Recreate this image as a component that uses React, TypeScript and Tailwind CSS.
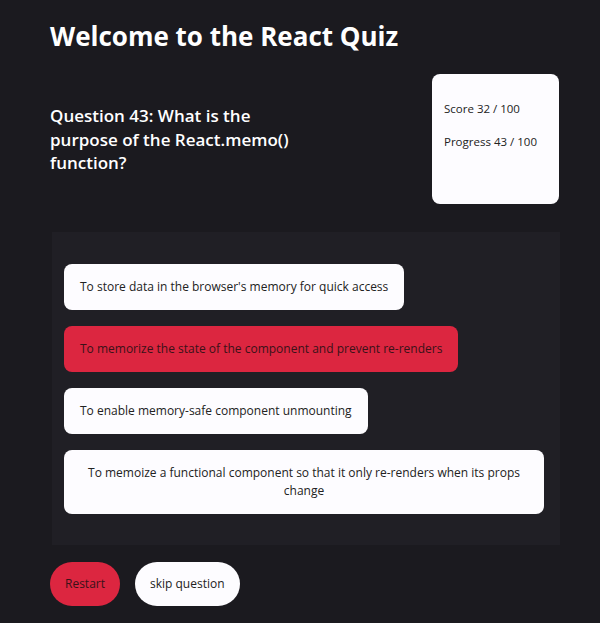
const answers = [
  "To store data in the browser's memory for quick access",
  "To memorize the state of the component and prevent re-renders",
  "To enable memory-safe component unmounting",
  "To memoize a functional component so that it only re-renders when its props change",
];

const picked = 1;

export default function App() {
  return (
    <main className="min-h-screen bg-[#1b1a1f] pt-[18px] pr-[41px] pb-4 pl-[50px] font-['Open_Sans','Noto_Sans',sans-serif] text-white">
      <h1 className="text-[26px] font-bold leading-9">Welcome to the React Quiz</h1>

      <section className="mt-5 flex items-start justify-between">
        <h2 className="w-[262px] pt-[30px] text-[17px] font-semibold leading-[23.5px]">
          Question 43: What is the purpose of the React.memo() function?
        </h2>
        <div className="h-[130px] w-[127px] rounded-lg bg-[#fdfcff] px-3 pt-[26px] text-[11.5px] text-[#222]">
          <p>Score 32 / 100</p>
          <p className="mt-[16px]">Progress 43 / 100</p>
        </div>
      </section>

      <section className="mt-7 ml-[2px] flex w-[508px] flex-col items-start gap-4 bg-[#201f25] px-3 pt-8 pb-[31px]">
        {answers.map((a, i) => (
          <button
            key={a}
            type="button"
            className={`max-w-[480px] rounded-lg px-4 py-[14px] text-[12px] leading-[18px] ${
              i === picked ? "bg-[#dc2640] text-[#3a1218]" : "bg-[#fdfcff] text-[#222]"
            }`}
          >
            {a}
          </button>
        ))}
      </section>

      <div className="mt-[17px] flex gap-[15px] text-[12px]">
        <button type="button" className="h-11 rounded-full bg-[#dc2640] px-[15px] text-[#3a1218]">
          Restart
        </button>
        <button type="button" className="h-11 rounded-full bg-[#fdfcff] px-[15px] text-[#222]">
          skip question
        </button>
      </div>
    </main>
  );
}
